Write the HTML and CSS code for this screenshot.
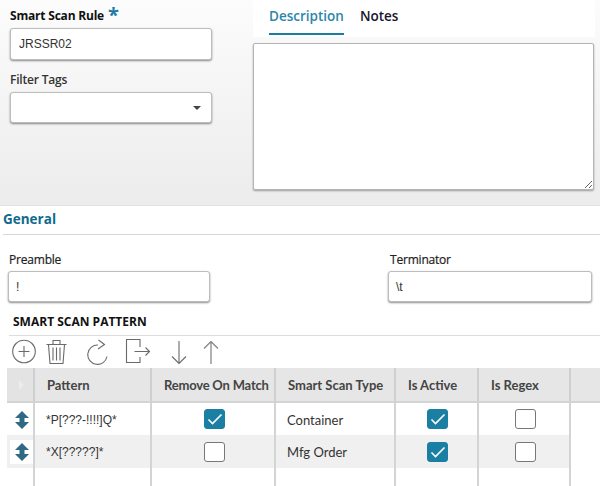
FILE: index.html
```html
<!DOCTYPE html>
<html lang="en">
<head>
<meta charset="utf-8">
<title>Smart Scan Rule</title>
<link rel="stylesheet" href="styles.css">
</head>
<body>
<section class="top">
  <div class="top-left">
    <div class="field-label first-label"><span>Smart Scan Rule</span><span class="req">*</span></div>
    <div class="box rule-box"><span class="val">JRSSR02</span></div>
    <div class="field-label tags-label">Filter Tags</div>
    <div class="box tags-box"><span class="caret"></span></div>
  </div>
  <div class="top-right">
    <div class="tabs">
      <span class="tab active">Description</span>
      <span class="tab">Notes</span>
    </div>
    <textarea class="desc"></textarea>
  </div>
</section>
<section class="general">
  <h2 class="general-title">General</h2>
  <div class="pair">
    <div class="pair-item">
      <div class="plain-label">Preamble</div>
      <div class="box pre-box"><span class="val">!</span></div>
    </div>
    <div class="pair-item term">
      <div class="plain-label term-label">Terminator</div>
      <div class="box term-box"><span class="val">\t</span></div>
    </div>
  </div>
  <h3 class="pattern-title">SMART SCAN PATTERN</h3>
  <div class="toolbar">
    <svg class="ic ic-add" width="24" height="26" viewBox="0 0 24 26"><circle cx="12" cy="12.500" r="11.300"/><path d="M12 7v11M6.500 12.500h11"/></svg>
    <svg class="ic ic-del" width="21" height="26" viewBox="0 0 21 26"><path d="M.5 5.500h20M7 5.500V1.500h7v4M2.500 5.500l1.500 19h13l1.500-19M7 8.500v13M10.500 8.500v13M14 8.500v13"/></svg>
    <svg class="ic ic-redo" width="24" height="26" viewBox="0 0 24 26"><path d="M12 6A9.700 9.700 0 1 0 21 17.500M12.500 1l6 4.500-6.500 4.500"/></svg>
    <svg class="ic ic-exit" width="26" height="26" viewBox="0 0 26 26"><path d="M15 8V.5H1.500v23H15V18M9.500 12.500h15M20.500 8.500l4 4-4 4"/></svg>
    <svg class="ic ic-down" width="16" height="24" viewBox="0 0 16 24"><path d="M8 0v22.500M1 15.500l7 7 7-7"/></svg>
    <svg class="ic ic-up" width="16" height="24" viewBox="0 0 16 24"><path d="M8 23V.5M1 7.500l7-7 7 7"/></svg>
  </div>
  <div class="grid">
    <div class="hd hd-first"><span class="hd-arrow"></span></div>
    <div class="hd">Pattern</div>
    <div class="hd hd-tight">Remove On Match</div>
    <div class="hd">Smart Scan Type</div>
    <div class="hd">Is Active</div>
    <div class="hd">Is Regex</div>
    <div class="hd hd-last"></div>

    <div class="c c-move"><span class="mv-box"><svg width="14" height="18" viewBox="0 0 14 18"><path class="mv" d="M7 0l7 7H9.500v4H14l-7 7-7-7h4.500V7H0z"/></svg></span></div>
    <div class="c c-text">*P[???-!!!!]Q*</div>
    <div class="c c-check"><span class="chk on"><svg width="20" height="20" viewBox="0 0 20 20"><path d="M3.500 10.500l4 4 9-9"/></svg></span></div>
    <div class="c c-type">Container</div>
    <div class="c c-check"><span class="chk on"><svg width="20" height="20" viewBox="0 0 20 20"><path d="M3.500 10.500l4 4 9-9"/></svg></span></div>
    <div class="c c-check"><span class="chk"></span></div>
    <div class="c c-end"></div>

    <div class="c c-move alt"><span class="mv-box"><svg width="14" height="18" viewBox="0 0 14 18"><path class="mv" d="M7 0l7 7H9.500v4H14l-7 7-7-7h4.500V7H0z"/></svg></span></div>
    <div class="c c-text alt">*X[?????]*</div>
    <div class="c c-check alt"><span class="chk"></span></div>
    <div class="c c-type alt">Mfg Order</div>
    <div class="c c-check alt"><span class="chk on"><svg width="20" height="20" viewBox="0 0 20 20"><path d="M3.500 10.500l4 4 9-9"/></svg></span></div>
    <div class="c c-check alt"><span class="chk"></span></div>
    <div class="c c-end"></div>

    <div class="c blank"></div><div class="c blank"></div><div class="c blank"></div><div class="c blank"></div><div class="c blank"></div><div class="c blank"></div><div class="c blank c-end"></div>
  </div>
</section>
</body>
</html>
```
FILE: styles.css
```css
* { box-sizing: border-box; }
html, body { margin: 0; padding: 0; }
body {
  width: 600px;
  height: 486px;
  overflow: hidden;
  background: #fff;
  font-family: "Open Sans", "Noto Sans", sans-serif;
  color: #222;
}
.top {
  height: 206px;
  display: flex;
  background: linear-gradient(#fcfcfc, #ececec);
  border-bottom: 1px solid #e2e2e2;
}
.top-left {
  width: 253px;
  padding: 0 0 0 10px;
}
.field-label {
  font-size: 12px;
  font-weight: 600;
  line-height: 16px;
  letter-spacing: -0.2px;
  color: #1a1a1a;
}
.first-label {
  height: 28px;
  padding-top: 8px;
  display: flex;
  font-weight: 700;
  color: #111;
}
.req {
  color: #1f7ba3;
  font-size: 20px;
  line-height: 16px;
  margin-left: 4px;
  margin-top: -1px;
}
.box {
  background: #fff;
  border: 1px solid #bdbdbd;
  border-radius: 3px;
  box-shadow: 0 1px 2px rgba(0, 0, 0, 0.45);
  display: flex;
  align-items: center;
  padding-left: 8px;
}
.val {
  font-family: "Liberation Sans", Arial, sans-serif;
  font-size: 12px;
  color: #333;
}
.rule-box { width: 202px; height: 32px; }
.tags-label { margin-top: 12px; height: 20px; font-weight: 600; color: #333; }
.tags-box { width: 202px; height: 31px; justify-content: flex-end; padding-right: 10px; }
.caret {
  width: 0;
  height: 0;
  border-left: 4px solid transparent;
  border-right: 4px solid transparent;
  border-top: 4px solid #444;
}
.top-right { width: 342px; }
.tabs {
  height: 37px;
  background: #fff;
  display: flex;
  padding-left: 16px;
  gap: 16px;
}
.tab {
  height: 35px;
  padding-top: 6px;
  font-size: 13.500px;
  line-height: 20px;
  font-weight: 600;
  color: #16162e;
}
.tab.active {
  color: #2d86ab;
  border-bottom: 2px solid #1b7ba0;
}
.desc {
  display: block;
  width: 341px;
  height: 147px;
  margin: 6px 0 0;
  padding: 0;
  background: #fff;
  border: 1px solid #b5b5b5;
  border-radius: 2px;
  box-shadow: 0 1px 2px rgba(0, 0, 0, 0.35);
  outline: none;
  resize: both;
}
.general-title {
  margin: 0 0 0 3px;
  height: 29px;
  padding-top: 4px;
  font-size: 13.500px;
  line-height: 19px;
  font-weight: 700;
  color: #0f6a8e;
  border-bottom: 1px solid #d8d8d8;
}
.pair {
  display: flex;
  margin-top: 16px;
  padding-left: 8px;
}
.pair-item { width: 380px; }
.term { width: 204px; }
.plain-label {
  font-size: 12px;
  line-height: 18px;
  font-weight: 400;
  letter-spacing: -0.2px;
  color: #222;
  height: 20px;
  padding-left: 1px;
  -webkit-text-stroke: 0.2px #222;
}
.term-label { padding-left: 2px; }
.pre-box { width: 202px; height: 31px; padding-left: 7px; }
.term-box { width: 204px; height: 31px; padding-left: 7px; }
.pattern-title {
  margin: 11px 0 0 9px;
  padding: 0 0 0 4px;
  height: 23px;
  font-size: 12px;
  line-height: 18px;
  font-weight: 700;
  color: #111;
  border-bottom: 1px solid #ddd;
}
.toolbar {
  height: 32px;
  padding: 3px 0 0 12px;
  display: flex;
  align-items: flex-start;
}
.ic { fill: none; stroke: #6a6a6a; stroke-width: 1.100; flex: none; }
.ic-del { margin-left: 10px; }
.ic-redo { margin-left: 19px; }
.ic-exit { margin-left: 15px; }
.ic-down { margin-left: 20px; margin-top: 2px; }
.ic-up { margin-left: 16px; margin-top: 2px; stroke: #888; stroke-width: 1.300; }
.grid {
  margin-left: 7px;
  display: grid;
  grid-template-columns: 28px 117px 124px 120px 83px 92px 29px;
  grid-template-rows: 35px 32px 33px 20px;
}
.hd {
  background: #e6e6e6;
  border-right: 2px solid #cfcfcf;
  border-bottom: 2px solid #d4d4d4;
  font-family: Lato, "Open Sans", sans-serif;
  font-size: 13px;
  font-weight: 700;
  color: #444;
  padding: 1px 0 0 12px;
  display: flex;
  align-items: center;
  white-space: nowrap;
}
.hd-tight { letter-spacing: -0.2px; }
.hd-first { background: #e3e3e3; }
.hd-arrow {
  width: 0;
  height: 0;
  border-top: 5px solid transparent;
  border-bottom: 5px solid transparent;
  border-left: 5px solid #ececec;
}
.hd-last { border-right: none; }
.c {
  border-right: 2px solid #d4d4d4;
  display: flex;
  align-items: center;
  font-size: 12px;
  color: #333;
}
.c-text {
  font-family: "Liberation Sans", Arial, sans-serif;
  font-size: 12px;
  padding: 1px 0 0 11px;
}
.c-type {
  font-family: Lato, "Open Sans", sans-serif;
  font-size: 13px;
  padding: 1px 0 0 11px;
}
.c-check { justify-content: center; padding-left: 2px; }
.c-move { padding-left: 3px; }
.c-end { border-right: none; }
.alt { background: #f0f0f0; }
.mv-box {
  width: 24px;
  height: 24px;
  background: #fff;
  display: flex;
  align-items: center;
  justify-content: center;
  padding: 1px 0 0 1px;
}
.mv { fill: #2f6a84; }
.chk {
  width: 21px;
  height: 20px;
  background: #fff;
  border: 1px solid #777;
  border-radius: 3px;
  display: block;
}
.chk.on { background: #1b7fa3; border-color: #1b7fa3; }
.chk svg { display: block; margin: -1px 0 0; fill: none; stroke: #fff; stroke-width: 1.600; }
```
